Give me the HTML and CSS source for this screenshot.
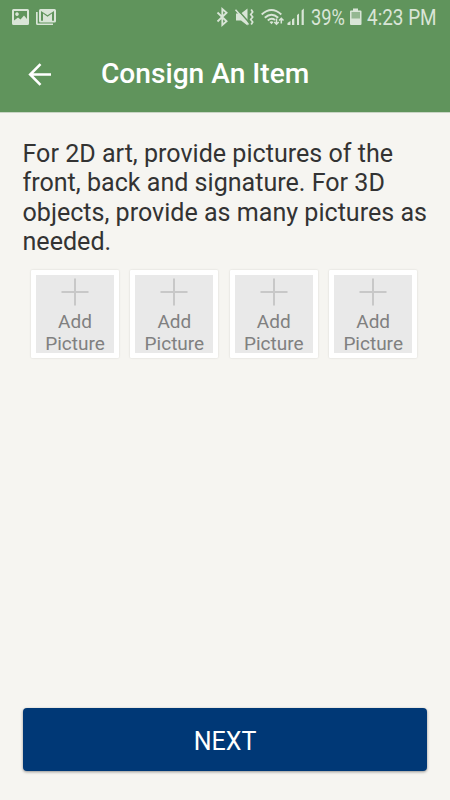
FILE: index.html
```html
<!DOCTYPE html>
<html lang="en">
<head>
<meta charset="utf-8">
<title>Consign An Item</title>
<link rel="stylesheet" href="styles.css">
</head>
<body>
<div class="screen">
  <header class="header">
    <div class="status">
      <svg class="notices" width="60" height="36" viewBox="0 0 60 36" fill="currentColor">
        <path fill-rule="evenodd" d="M13.500 9H27.500Q29 9 29 10.500V23.500Q29 25 27.500 25H13.500Q12 25 12 23.500V10.500Q12 9 13.500 9ZM14 11V20.500L18 17.500L20.500 19.500L24 15.500L27 19V11ZM17 12.300a1.800 1.800 0 1 0 .01 0Z"/>
        <path d="M36 12h1.700v11.500H53V25H37.500Q36 25 36 23.500Z"/>
        <path fill-rule="evenodd" d="M40.500 9H54.500Q56 9 56 10.500V21Q56 22.500 54.500 22.500H40.500Q39 22.500 39 21V10.500Q39 9 40.500 9ZM41 11V20.700H43V13.500L47.500 16.700L52 13.500V20.700H54V11L47.500 15.200Z"/>
      </svg>
      <svg class="signals" width="94" height="36" viewBox="213 0 94 36" fill="none" stroke="currentColor" stroke-width="1.800">
        <path d="M217.500 12.500L226.600 21.300L222.300 25V9L226.600 12.700L217.500 21.500"/>
        <path fill="currentColor" stroke="none" d="M236 13.500h5l6.500-5v17L241 20.500H236Z"/>
        <path stroke="#60945c" stroke-width="1.500" d="M236.500 8.500L250 23.500"/>
        <path stroke-width="1.500" d="M235.500 9.800L248.500 24.500"/>
        <path stroke-width="1.700" d="M251.200 9.500l1.500 2.500-2 2.500 2 2.500-2 2.500 2 2.500-1.500 2.500"/>
        <path stroke-width="1.900" d="M261.700 14.500Q271.500 5.500 281.300 14.500M264.800 17.800Q271.500 11.500 278.200 17.800M267.800 20.500Q271.500 17.300 275 20"/>
        <path fill="currentColor" stroke="none" d="M269.500 22Q271.500 20.500 273.500 22L271.500 24.300Z"/>
        <path stroke-width="1.500" d="M276.500 18.500v5.500M274.300 22l2.200 2.200 2.200-2.200M281.300 23.500v-5.200M279.100 20.500l2.200-2.200 2.200 2.200"/>
        <path fill="currentColor" stroke="none" d="M287.500 25v-2l3-2V25ZM292 19.500l2.300-1.500v7H292ZM297 15l2-1.500V25H297ZM301.600 10.500l2.200-2V25h-2.200Z"/>
      </svg>
      <span class="level">39%</span>
      <svg class="battery" width="13" height="36" viewBox="349 0 13 36" fill="currentColor">
        <path d="M353 8.500h5v2h2.500q1 0 1 1V24q0 1-1 1h-9.500q-1 0-1-1V11.500q0-1 1-1h2Z"/>
        <path fill="#94b791" d="M351.500 12h8.500v6.500h-8.500Z"/>
      </svg>
      <span class="clock">4:23 PM</span>
    </div>
    <div class="bar">
      <svg class="back" width="24" height="24" viewBox="28 61 24 24" fill="none" stroke="#fff" stroke-width="2.600">
        <path d="M51 73.500H30.500M40.500 63.200L30.200 73.500L40.500 83.800"/>
      </svg>
      <h1 class="title">Consign An Item</h1>
    </div>
  </header>
  <main class="content">
    <p class="intro">For 2D art, provide pictures of the<br>front, back and signature. For 3D<br>objects, provide as many pictures as<br>needed.</p>
    <div class="pictures">
      <div class="card"><div class="slot"><svg class="plus" viewBox="0 0 28 28"><path d="M.5 14H27.500M14 .5V27.500"/></svg><span>Add<br>Picture</span></div></div>
      <div class="card"><div class="slot"><svg class="plus" viewBox="0 0 28 28"><path d="M.5 14H27.500M14 .5V27.500"/></svg><span>Add<br>Picture</span></div></div>
      <div class="card"><div class="slot"><svg class="plus" viewBox="0 0 28 28"><path d="M.5 14H27.500M14 .5V27.500"/></svg><span>Add<br>Picture</span></div></div>
      <div class="card"><div class="slot"><svg class="plus" viewBox="0 0 28 28"><path d="M.5 14H27.500M14 .5V27.500"/></svg><span>Add<br>Picture</span></div></div>
    </div>
  </main>
  <button class="next">NEXT</button>
</div>
</body>
</html>
```
FILE: styles.css
```css
* { box-sizing: border-box; }
body { margin: 0; font-family: Roboto, sans-serif; }
.screen { width: 450px; height: 800px; display: flex; flex-direction: column; background: #f6f5f1; overflow: hidden; }
.header { height: 112px; flex: none; background: #60945c; box-shadow: 0 1px 0 #c9d5c5; }
.status { height: 36px; display: flex; color: #d9e5d7; font-size: 21.500px; line-height: 36px; white-space: nowrap; }
.status svg { flex: none; }
.signals { margin-left: 153px; }
.level { width: 34px; margin-left: 4px; transform: scaleX(.85); transform-origin: 0 50%; }
.battery { margin-left: 4px; }
.clock { margin-left: 5px; width: 70px; transform: scaleX(.88); transform-origin: 0 50%; }
.bar { height: 76px; display: flex; align-items: center; padding: 0 0 1px 28px; }
.title { margin: 1px 0 0 49px; color: #fff; font-size: 28.150px; line-height: 36px; font-weight: 500; white-space: nowrap; }
.content { flex: 1; padding: 27px 22.500px 0; }
.intro { margin: 0; color: #333; font-size: 25.080px; line-height: 29.300px; white-space: nowrap; }
.pictures { display: flex; gap: 11.400px; margin: 14px 0 0 8.500px; }
.card { flex: none; width: 88px; height: 88px; padding: 5px; background: #fff; border-radius: 1px; box-shadow: 0 0 2px rgba(0, 0, 0, .15); }
.slot { height: 78px; display: flex; flex-direction: column; align-items: center; background: #e9e9e9; color: #808080; font-size: 19px; line-height: 22px; text-align: center; }
.plus { width: 28px; height: 28px; margin: 3px 0 5px; flex: none; fill: none; stroke: #c8c8c8; stroke-width: 2; }
.next { flex: none; width: 404px; height: 63px; margin: 0 23px 29px; padding: 5px 0 0; border: 0; border-radius: 4px; background: #003876; color: #fff; font: 400 25px/30px Roboto, sans-serif; box-shadow: 0 1px 3px rgba(0, 0, 0, .4); }
```
